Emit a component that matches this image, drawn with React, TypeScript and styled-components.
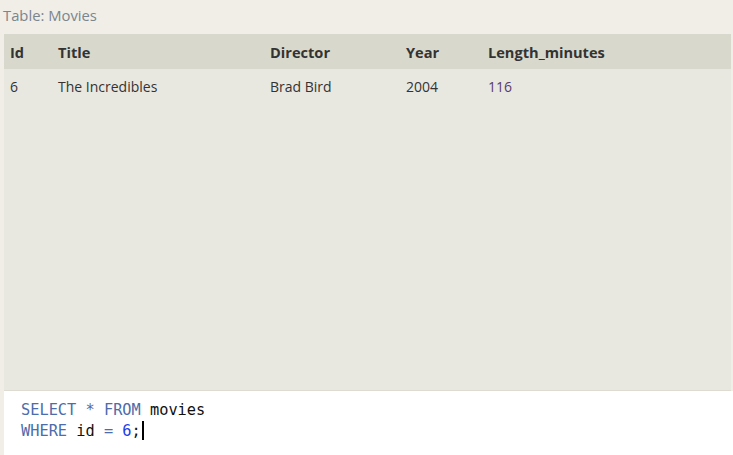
import React from "react";
import styled, { createGlobalStyle } from "styled-components";

const Global = createGlobalStyle`
  html, body { margin: 0; padding: 0; background: #f0eee7; }
  body { font-family: "Open Sans", "Noto Sans", sans-serif; overflow: hidden; }
  #root { height: 455px; }
`;

const Page = styled.div`
  display: flex;
  flex-direction: column;
  height: 455px;
  padding-left: 4px;
  box-sizing: border-box;
`;

const Caption = styled.div`
  height: 34px;
  box-sizing: border-box;
  padding-top: 5px;
  font-size: 14.8px;
  line-height: 20px;
  color: #7b858e;
  margin-left: -1px;
`;

const Panel = styled.div`
  flex: 1;
  margin-right: 2px;
  background: #e9e8e0;
  border-bottom: 1px solid #dedcd2;
`;

const Table = styled.table`
  width: 100%;
  border-collapse: collapse;
  font-size: 14px;
  color: #333333;
`;

const HeadCell = styled.th<{ $w?: number }>`
  background: #d9d8cc;
  height: 35px;
  padding: 0 6px;
  text-align: left;
  font-weight: 700;
  font-size: 14.6px;
  width: ${(p) => (p.$w ? `${p.$w - 12}px` : "auto")};
  box-sizing: content-box;
`;

const Cell = styled.td<{ $accent?: boolean }>`
  height: 34px;
  padding: 0 6px;
  text-align: left;
  color: ${(p) => (p.$accent ? "#5a3b6c" : "#333333")};
`;

const Editor = styled.div`
  height: 64px;
  background: #ffffff;
  padding: 9px 0 0 17px;
  box-sizing: border-box;
  font-family: "DejaVu Sans Mono", "Liberation Mono", monospace;
  font-size: 15.3px;
  line-height: 21px;
  color: #111111;
  white-space: pre;
`;

const Line = styled.div`
  display: block;
`;

const Kw = styled.span`
  color: #4d6cab;
`;

const Num = styled.span`
  color: #2040e8;
`;

const Caret = styled.span`
  display: inline-block;
  width: 2px;
  height: 19px;
  background: #000;
  margin-left: 1px;
  vertical-align: -4px;
`;

const columns = [
  { key: "Id", w: 48 },
  { key: "Title", w: 212 },
  { key: "Director", w: 136 },
  { key: "Year", w: 82 },
  { key: "Length_minutes" },
];

export default function App() {
  return (
    <>
      <Global />
      <Page>
        <Caption>Table: Movies</Caption>
        <Panel>
          <Table>
            <thead>
              <tr>
                {columns.map((c) => (
                  <HeadCell key={c.key} $w={c.w}>
                    {c.key}
                  </HeadCell>
                ))}
              </tr>
            </thead>
            <tbody>
              <tr>
                <Cell>6</Cell>
                <Cell>The Incredibles</Cell>
                <Cell>Brad Bird</Cell>
                <Cell>2004</Cell>
                <Cell $accent>116</Cell>
              </tr>
            </tbody>
          </Table>
        </Panel>
        <Editor>
          <Line>
            <Kw>SELECT</Kw>{" "}<Kw>*</Kw>{" "}<Kw>FROM</Kw>{" movies"}
          </Line>
          <Line>
            <Kw>WHERE</Kw>{" id "}<Kw>=</Kw>{" "}<Num>6</Num>;<Caret />
          </Line>
        </Editor>
      </Page>
    </>
  );
}
